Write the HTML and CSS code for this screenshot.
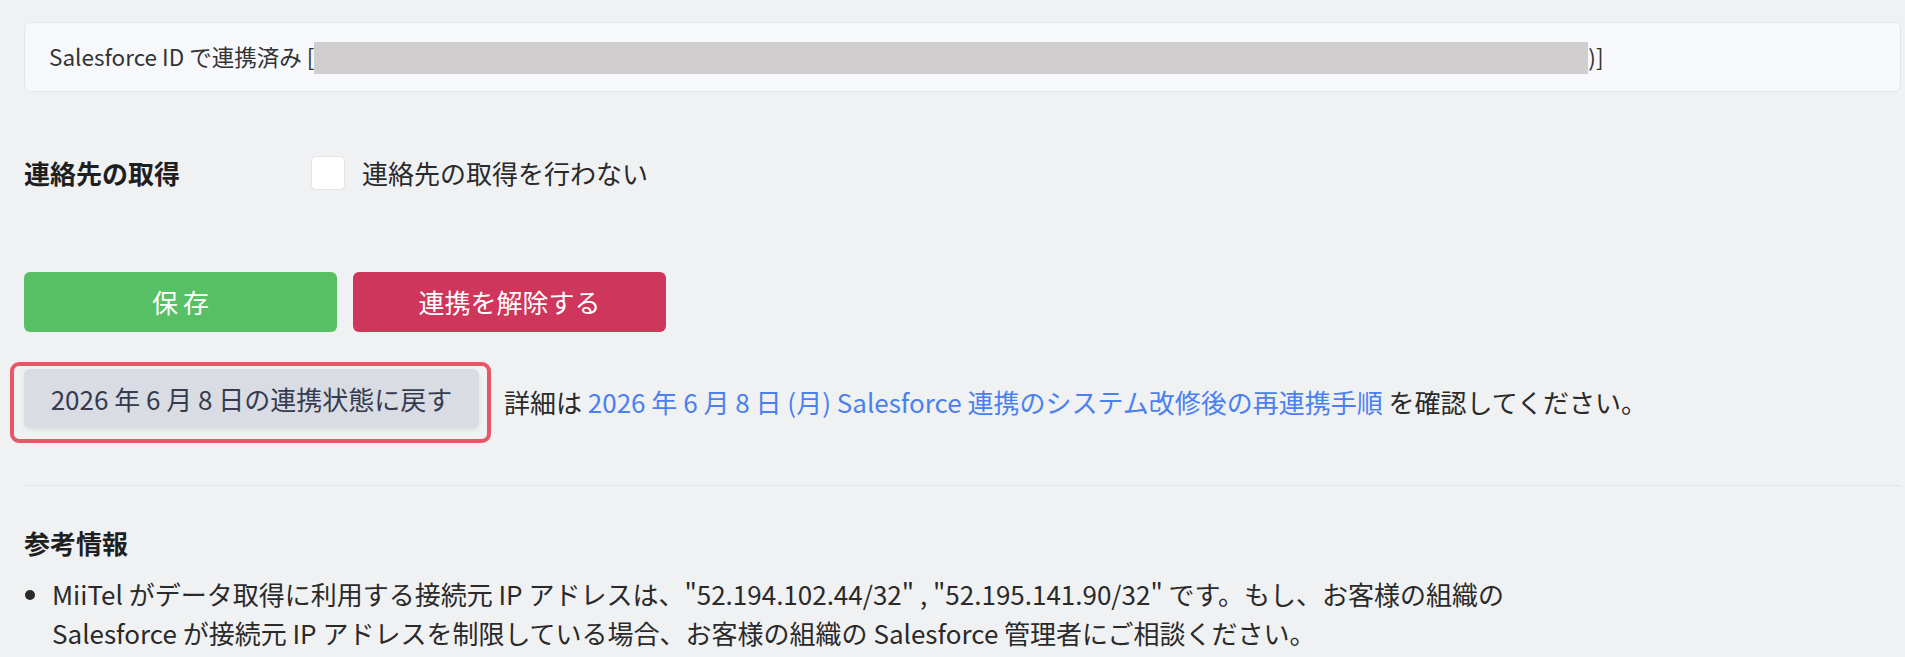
FILE: index.html
```html
<!doctype html>
<html lang="ja">
<head>
    <meta charset="UTF-8">
    <meta name="viewport" content="width=device-width, initial-scale=1.0">
    <title>Salesforce 連携設定</title>
    <link rel="stylesheet" href="styles.css">
</head>
<body>
    <div class="status-card">
        Salesforce ID で連携済み [<span class="masked"></span>)]
    </div>

    <div class="form-row">
        <div class="form-label">連絡先の取得</div>
        <label class="check-field">
            <input type="checkbox" class="check-box">
            <span>連絡先の取得を行わない</span>
        </label>
    </div>

    <div class="actions">
        <button class="btn btn-save">保存</button>
        <button class="btn btn-unlink">連携を解除する</button>
    </div>

    <div class="restore-row">
        <div class="highlight">
            <button class="btn btn-restore">2026 年 6 月 8 日の連携状態に戻す</button>
        </div>
        <p class="restore-note">詳細は <a href="#" class="link">2026 年 6 月 8 日 (月) Salesforce 連携のシステム改修後の再連携手順</a> を確認してください。</p>
    </div>

    <hr class="divider">

    <h3 class="info-title">参考情報</h3>
    <ul class="info-list">
        <li>MiiTel がデータ取得に利用する接続元 IP アドレスは、"52.194.102.44/32" , "52.195.141.90/32" です。もし、お客様の組織の Salesforce が接続元 IP アドレスを制限している場合、お客様の組織の Salesforce 管理者にご相談ください。</li>
    </ul>
</body>
</html>
```

FILE: styles.css
```css
body{
    margin: 0;
    padding: 22px 4px 0 24px;
    background: #f0f1f3;
    color: #2a2a2a;
    font-family: "Noto Sans CJK JP", "Noto Sans", sans-serif;
    font-size: 26px;
    line-height: 36px;
}
.status-card{
    background: #f6f8fb;
    border: 1px solid #e4e6ea;
    border-radius: 6px;
    padding: 17px 24px;
    font-size: 22.5px;
    line-height: 33px;
    color: #333;
}
.masked{
    display: inline-block;
    width: 1274px;
    height: 32px;
    background: #d0cecf;
    vertical-align: middle;
    margin-top: -4px;
}
.form-row{
    display: flex;
    align-items: center;
    margin-top: 63px;
}
.form-label{
    width: 287px;
    font-weight: 700;
    color: #1f1f1f;
}
.check-field{
    display: flex;
    align-items: center;
    gap: 17px;
}
.check-box{
    appearance: none;
    margin: 0;
    width: 34px;
    height: 34px;
    background: #fff;
    border: 1px solid #e3e5e9;
    border-radius: 5px;
}
.actions{
    display: flex;
    gap: 16px;
    margin-top: 81px;
}
.btn{
    font-family: inherit;
    font-size: 26px;
    border: none;
    border-radius: 6px;
    cursor: pointer;
}
.btn-save, .btn-unlink{
    width: 313px;
    height: 60px;
    color: #fff;
}
.btn-save{
    background: #57c064;
    letter-spacing: 5px;
    text-indent: 5px;
}
.btn-unlink{
    background: #cf365b;
}
.restore-row{
    display: flex;
    align-items: center;
    margin-top: 30px;
}
.highlight{
    margin-left: -14px;
    padding: 3px 8px 11px 10px;
    border: 4px solid #e85668;
    border-radius: 9px;
}
.btn-restore{
    display: block;
    width: 455px;
    height: 59px;
    background: #d9dde3;
    color: #363b50;
    box-shadow: 0 2px 4px rgba(0, 0, 0, .08);
}
.restore-note{
    margin: 0 0 0 13px;
}
.link{
    color: #4a80f0;
    text-decoration: none;
}
.divider{
    margin: 42px 0 0;
    border: none;
    border-top: 1px solid #e1e3e7;
}
.info-title{
    margin: 39px 0 0;
    font-size: 26px;
    font-weight: 700;
    line-height: 36px;
    color: #1f1f1f;
}
.info-list{
    margin: 13px 0 0;
    padding-left: 28px;
    max-width: 1530px;
    line-height: 39px;
}
```
